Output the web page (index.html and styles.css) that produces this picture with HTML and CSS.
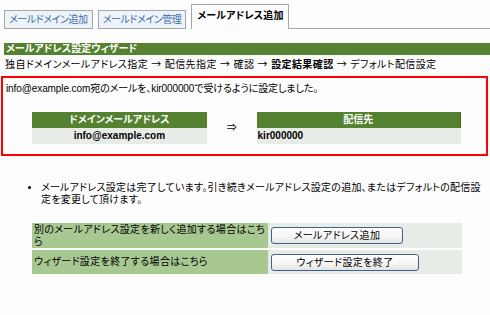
FILE: index.html
```html
<!DOCTYPE html>
<html lang="ja">
<head>
<meta charset="utf-8">
<title>メールアドレス追加</title>
<link rel="stylesheet" href="styles.css">
</head>
<body>
<div class="tabs">
  <div class="tab">メールドメイン追加</div>
  <div class="tab">メールドメイン管理</div>
  <div class="tab active">メールアドレス追加</div>
  <div class="tab-fill"></div>
</div>
<div class="wizard-title">メールアドレス設定ウィザード</div>
<div class="steps">独自ドメインメールアドレス指定 <span class="arr">→</span> 配信先指定 <span class="arr">→</span> 確認 <span class="arr">→</span> <b>設定結果確認</b> <span class="arr">→</span> デフォルト配信設定</div>
<div class="result">
  <p class="msg">info@example.com宛のメールを、kir000000で受けるように設定しました。</p>
  <table class="map">
    <tr>
      <th class="c1">ドメインメールアドレス</th>
      <td class="arrow" rowspan="2">⇒</td>
      <th class="c3">配信先</th>
    </tr>
    <tr>
      <td class="addr">info@example.com</td>
      <td class="dest">kir000000</td>
    </tr>
  </table>
</div>
<ul class="notes">
  <li>メールアドレス設定は完了しています。引き続きメールアドレス設定の追加、またはデフォルトの配信設定を変更して頂けます。</li>
</ul>
<table class="actions">
  <tr>
    <td class="label">別のメールアドレス設定を新しく追加する場合はこちら</td>
    <td class="ctrl"><button class="btn b1" type="button">メールアドレス追加</button></td>
  </tr>
  <tr>
    <td class="label">ウィザード設定を終了する場合はこちら</td>
    <td class="ctrl"><button class="btn b2" type="button">ウィザード設定を終了</button></td>
  </tr>
</table>
</body>
</html>
```
FILE: styles.css
```css
html, body {
  margin: 0;
  padding: 0;
  background: #fdfdfd;
}
body {
  font-family: "Liberation Sans", "Noto Sans CJK JP", sans-serif;
  font-size: 10px;
  line-height: 12px;
  color: #000;
  font-feature-settings: "palt";
}
.tabs {
  display: flex;
  align-items: flex-end;
  padding: 4px 0 0 4px;
  height: 25px;
}
.tab {
  height: 17px;
  line-height: 17px;
  padding: 0 4px;
  margin-right: 5px;
  border: 1px solid #a6a6a6;
  background: #eef3f8;
  color: #3b6cb0;
  white-space: nowrap;
  letter-spacing: -0.4px;
}
.tab.active {
  height: 24px;
  line-height: 22px;
  border-bottom: none;
  background: #fdfdfd;
  color: #000;
  font-weight: bold;
  padding: 0 5px;
  margin-right: 0;
  letter-spacing: 0.1px;
}
.tab-fill {
  flex: 1;
  border-bottom: 1px solid #a6a6a6;
}
.wizard-title {
  margin: 14px 0 0 4px;
  height: 12px;
  line-height: 12px;
  padding-left: 2px;
  background: #548230;
  color: #fff;
  font-weight: bold;
}
.steps {
  margin-top: 3px;
  padding-left: 5px;
  line-height: 12px;
  letter-spacing: 0.4px;
}
.arr {
  font-family: "Noto Sans CJK JP", sans-serif;
}
.result {
  margin: 5px 0 0 1px;
  width: 483px;
  border: 2px solid #f00;
  padding: 5px 0 10px 0;
}
.msg {
  margin: 0 0 17px 3px;
  line-height: 12px;
  letter-spacing: -0.1px;
}
.map {
  border-collapse: collapse;
  border-spacing: 0;
  margin-left: 29px;
  width: 429px;
}
.map th, .map td {
  padding: 0;
  height: 16px;
  line-height: 16px;
}
.map th {
  background: #548230;
  color: #fff;
  font-weight: bold;
  text-align: center;
}
.map .c1 { width: 175px; }
.map .c3 { width: 204px; border-right: 1px solid #3f6a22; }
.map .arrow {
  width: 50px;
  text-align: center;
  background: transparent;
}
.map .addr, .map .dest {
  background: #e8ece7;
  font-weight: bold;
}
.map .addr { text-align: center; }
.map .dest { text-align: left; padding-left: 1px; }
.notes {
  margin: 26px 0 0 0;
  padding: 0 4px 0 41px;
  line-height: 12px;
  letter-spacing: 0.25px;
}
.actions {
  margin: 17px 0 0 32px;
  width: 430px;
  border-collapse: separate;
  border-spacing: 0;
}
.actions td {
  padding: 0;
  border-bottom: 2px solid #fdfdfd;
  vertical-align: middle;
}
.actions tr:first-child td { height: 25px; }
.actions tr:last-child td { height: 24px; }
.actions .label {
  width: 234px;
  padding-left: 2px;
  background: #a8c892;
  line-height: 12px;
  letter-spacing: 0.35px;
}
.actions .ctrl {
  background: #e8ece6;
  padding-left: 3px;
}
.btn {
  display: block;
  height: 17px;
  margin: 0;
  padding: 0;
  font-family: "Liberation Sans", "Noto Sans CJK JP", sans-serif;
  font-size: 10px;
  line-height: 15px;
  color: #000;
  border: 1px solid #41628f;
  border-radius: 3px;
  background: linear-gradient(#ffffff, #f4f4f2 60%, #e4e4e0);
  font-feature-settings: "palt";
  letter-spacing: 0.4px;
}
.b1 { width: 132px; }
.b2 { width: 148px; }
```
